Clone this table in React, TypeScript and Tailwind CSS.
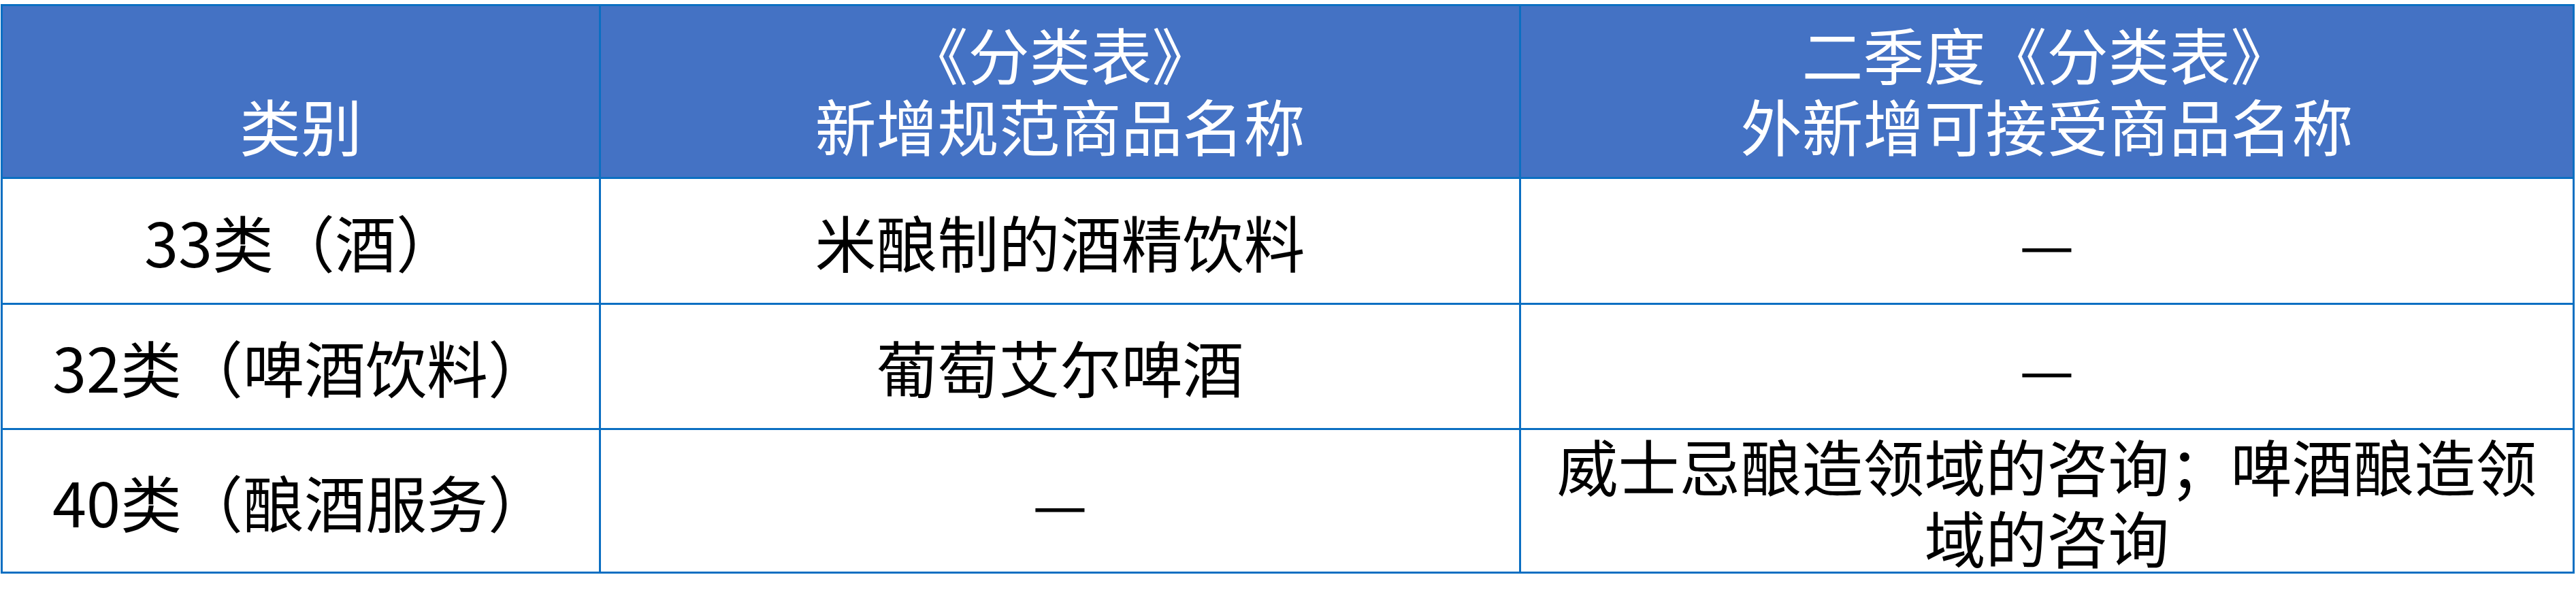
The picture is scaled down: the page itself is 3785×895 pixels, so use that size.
import React from "react";

const font = { fontFamily: '"Noto Sans CJK SC", "Noto Sans", sans-serif' };

function Head({ children }: { children: React.ReactNode }) {
  return (
    <div className="bg-[#4472c4] text-white flex items-end justify-center text-center pb-[24px] text-[90px] leading-[105px]">
      <div>{children}</div>
    </div>
  );
}

function Cell({ children }: { children: React.ReactNode }) {
  return (
    <div className="bg-white text-black flex items-center justify-center text-center text-[90px] leading-[105px]">
      <div>{children}</div>
    </div>
  );
}

export default function App() {
  return (
    <div className="w-[3785px] h-[895px] bg-white pt-[6px] pl-[1px]" style={font}>
      <div className="w-[3782px] bg-[#0b6fc2] p-[3px] grid grid-cols-[876px_1349px_1545px] grid-rows-[251px_182px_181px_208px] gap-[3px]">
        <Head>类别</Head>
        <Head>
          《分类表》
          <br />
          新增规范商品名称
        </Head>
        <Head>
          二季度《分类表》
          <br />
          外新增可接受商品名称
        </Head>

        <Cell>33类（酒）</Cell>
        <Cell>米酿制的酒精饮料</Cell>
        <Cell>—</Cell>

        <Cell>32类（啤酒饮料）</Cell>
        <Cell>葡萄艾尔啤酒</Cell>
        <Cell>—</Cell>

        <Cell>40类（酿酒服务）</Cell>
        <Cell>—</Cell>
        <Cell>
          威士忌酿造领域的咨询；啤酒酿造领
          <br />
          域的咨询
        </Cell>
      </div>
    </div>
  );
}
